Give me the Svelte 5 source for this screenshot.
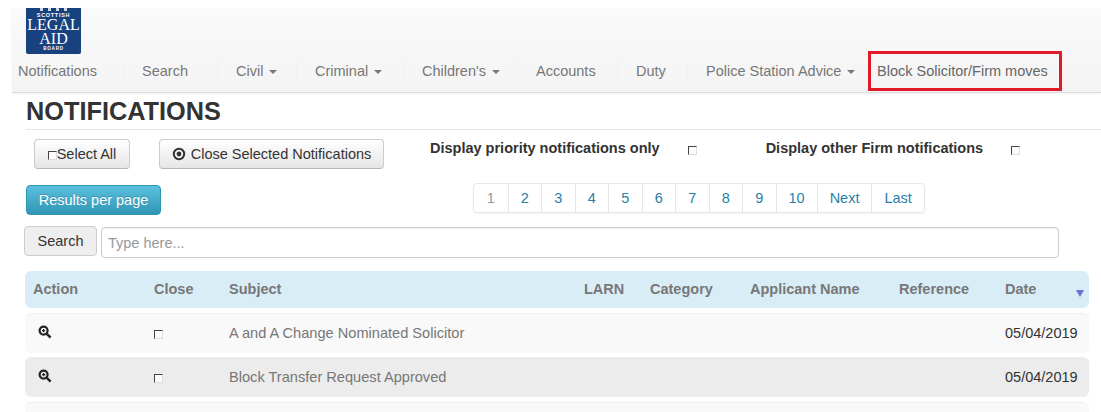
<script>
	const nav = [
		{ label: "Notifications" },
		{ label: "Search" },
		{ label: "Civil", caret: true },
		{ label: "Criminal", caret: true },
		{ label: "Children's", caret: true },
		{ label: "Accounts" },
		{ label: "Duty" },
		{ label: "Police Station Advice", caret: true }
	];
	const pages = ["1", "2", "3", "4", "5", "6", "7", "8", "9", "10", "Next", "Last"];
	const heads = ["Action", "Close", "Subject", "LARN", "Category", "Applicant Name", "Reference", "Date"];
	const rows = [
		{ subject: "A and A Change Nominated Solicitor", date: "05/04/2019" },
		{ subject: "Block Transfer Request Approved", date: "05/04/2019" },
		{ subject: "", date: "" }
	];
</script>

<div class="page">
	<header class="navbar">
		<div class="logo">
			<div class="crest"><i></i><i></i><i></i><i></i></div>
			<div class="scottish">SCOTTISH</div>
			<div class="big">LEGAL</div>
			<div class="big">AID</div>
			<div class="board">BOARD</div>
		</div>
		<nav class="links">
			{#each nav as item}
				<a class="link">{item.label}{#if item.caret}<b class="caret"></b>{/if}</a>
			{/each}
			<a class="link marked">Block Solicitor/Firm moves</a>
		</nav>
	</header>

	<h1>NOTIFICATIONS</h1>

	<div class="actions">
		<button class="btn select-all"><input type="checkbox" />Select All</button>
		<button class="btn close-selected">
			<svg width="14" height="14" viewBox="0 0 14 14">
				<circle cx="7" cy="7" r="5.2" fill="none" stroke="#333" stroke-width="2" />
				<circle cx="7" cy="7" r="2.4" fill="#333" />
			</svg>
			Close Selected Notifications
		</button>
		<label class="opt first">Display priority notifications only</label>
		<input class="opt-box" type="checkbox" />
		<label class="opt second">Display other Firm notifications</label>
		<input class="opt-box" type="checkbox" />
	</div>

	<div class="paging-row">
		<button class="btn-info">Results per page</button>
		<div class="pagination">
			{#each pages as p, i}
				<a class:current={i === 0}>{p}</a>
			{/each}
		</div>
	</div>

	<div class="search-row">
		<button class="search-btn">Search</button>
		<input class="search" placeholder="Type here..." />
	</div>

	<div class="table">
		<div class="row head">
			{#each heads as h}
				<div>{h}</div>
			{/each}
			<span class="sort"></span>
		</div>
		{#each rows as r, i}
			<div class="row item" class:alt={i === 1}>
				{#if r.subject}
					<div>
						<svg class="zoom" width="14" height="14" viewBox="0 0 14 14">
							<circle cx="5.6" cy="5.6" r="4" fill="none" stroke="#222" stroke-width="2.2" />
							<path d="M4 5.6h3.2M5.6 4v3.2" stroke="#222" stroke-width="1.2" />
							<path d="M8.8 8.8l3.8 3.8" stroke="#222" stroke-width="2.4" />
						</svg>
					</div>
					<div><input type="checkbox" /></div>
					<div class="subject">{r.subject}</div>
					<div></div>
					<div></div>
					<div></div>
					<div></div>
					<div class="date">{r.date}</div>
				{/if}
			</div>
		{/each}
	</div>
</div>

<style>
	:global(body) {
		font-family: "Liberation Sans", Arial, sans-serif;
		font-size: 14.5px;
		color: #333;
		background: #fff;
		overflow: hidden;
	}

	.page {
		height: 412px;
		overflow: hidden;
		padding-top: 8px;
		box-sizing: border-box;
	}

	.navbar {
		margin-left: 12px;
		height: 85px;
		background: linear-gradient(#fafafa, #f4f4f4);
		border-bottom: 1px solid #dcdcdc;
		box-shadow: 0 1px 2px rgba(0, 0, 0, 0.06);
		box-sizing: border-box;
		display: flex;
		flex-direction: column;
	}

	.logo {
		width: 55px;
		height: 46px;
		margin-left: 14px;
		background: #17417f;
		border-radius: 0 0 2px 2px;
		color: #fff;
		text-align: center;
		overflow: hidden;
		font-family: "Liberation Serif", serif;
		flex: none;
	}
	.crest {
		display: flex;
		justify-content: center;
		gap: 5px;
		height: 5px;
	}
	.crest i {
		width: 3px;
		height: 3px;
		background: #cfd8e6;
	}
	.scottish, .board {
		font-family: "Liberation Sans", sans-serif;
		font-weight: bold;
	}
	.scottish {
		font-size: 5.5px;
		line-height: 5px;
		letter-spacing: 0.7px;
	}
	.board {
		font-size: 4.5px;
		line-height: 5px;
		letter-spacing: 0.8px;
	}
	.big {
		font-size: 16px;
		line-height: 14px;
	}

	.links {
		display: grid;
		grid-template-columns: 124px 94px 79px 107px 114px 100px 70px 162px auto;
		padding-left: 6px;
		margin-top: -3px;
		height: 40px;
		align-items: center;
	}
	.link {
		color: #777;
		white-space: nowrap;
		position: relative;
		line-height: 40px;
		height: 40px;
		box-sizing: border-box;
	}
	/* the faint dividers between menu items */
	.link:not(:first-child):not(.marked)::before {
		content: "";
		position: absolute;
		left: -19px;
		top: 0;
		bottom: 0;
		width: 1px;
		background: linear-gradient(transparent, #f0f0f0, transparent);
	}
	.marked {
		width: 194px;
		border: 3px solid #e11a27;
		padding-left: 6px;
		line-height: 34px;
		color: #666;
	}
	.caret {
		display: inline-block;
		margin-left: 6px;
		vertical-align: middle;
		border-top: 4px solid #777;
		border-left: 4px solid transparent;
		border-right: 4px solid transparent;
	}

	h1 {
		margin: 4px 0 0 26px;
		padding-bottom: 3px;
		font-size: 25.3px;
		line-height: 29px;
		color: #333;
		border-bottom: 1px solid #e8e8e8;
	}

	.actions {
		display: flex;
		align-items: flex-start;
		margin: 9px 0 0 34px;
		height: 30px;
	}
	.btn {
		height: 30px;
		padding: 0;
		font: 14.5px "Liberation Sans", Arial, sans-serif;
		color: #333;
		background: linear-gradient(#fff, #e6e6e6);
		border: 1px solid #ccc;
		border-bottom-color: #b8b8b8;
		border-radius: 4px;
		display: flex;
		align-items: center;
		justify-content: center;
		box-sizing: border-box;
	}
	.select-all {
		width: 96px;
	}
	.close-selected {
		width: 225px;
		margin-left: 29px;
		gap: 5px;
	}
	input[type="checkbox"] {
		appearance: none;
		width: 9px;
		height: 9px;
		margin: 0;
		background: #fbfbfb;
		border: 1px solid #ddd;
		border-top-color: #444;
		border-left-color: #444;
		box-sizing: border-box;
	}
	.select-all input[type="checkbox"] {
		margin-top: 3px;
	}
	.opt {
		font-weight: bold;
		line-height: 18px;
	}
	.first {
		margin-left: 46px;
	}
	.second {
		margin-left: 69px;
	}
	input[type="checkbox"].opt-box {
		margin: 7px 0 0 28px;
	}

	.paging-row {
		display: flex;
		align-items: flex-start;
		margin: 14px 0 0 26px;
		height: 32px;
	}
	.btn-info {
		width: 135px;
		height: 30px;
		margin-top: 2px;
		padding: 0;
		font: 14.5px "Liberation Sans", Arial, sans-serif;
		color: #fff;
		text-shadow: 0 -1px 0 rgba(0, 0, 0, 0.2);
		background: linear-gradient(#5bc0de, #2f96b4);
		border: 1px solid #2f96b4;
		border-radius: 4px;
	}
	.pagination {
		display: flex;
		margin-left: 312px;
		height: 30px;
		border: 1px solid #e6e6e6;
		border-radius: 4px;
		box-shadow: 0 1px 2px rgba(0, 0, 0, 0.05);
		box-sizing: border-box;
	}
	.pagination a {
		min-width: 33.5px;
		padding: 0 12px;
		box-sizing: border-box;
		line-height: 28px;
		text-align: center;
		color: #2a7fa8;
		border-left: 1px solid #e6e6e6;
	}
	.pagination a.current {
		color: #999;
		border-left: none;
	}

	.search-row {
		display: flex;
		align-items: flex-start;
		margin: 11px 0 0 24px;
		height: 31px;
	}
	.search-btn {
		width: 73px;
		height: 30px;
		padding: 0;
		font: 14.5px "Liberation Sans", Arial, sans-serif;
		color: #333;
		background: #eee;
		border: 1px solid #ccc;
		border-radius: 4px;
	}
	.search {
		width: 958px;
		height: 31px;
		margin: 1px 0 0 4px;
		padding: 0 6px;
		font: 14.5px "Liberation Sans", Arial, sans-serif;
		color: #555;
		border: 1px solid #ccc;
		border-radius: 4px;
		box-sizing: border-box;
		box-shadow: inset 0 1px 1px rgba(0, 0, 0, 0.07);
	}
	.search::placeholder {
		color: #999;
	}

	.table {
		margin: 14px 12px 0 25px;
	}
	.row {
		display: grid;
		grid-template-columns: 121px 75px 355px 66px 100px 149px 106px 1fr;
		padding-left: 8px;
		align-items: center;
		border-radius: 6px;
		position: relative;
	}
	.head {
		height: 37px;
		padding-bottom: 2px;
		box-sizing: border-box;
		background: #d9edf7;
		font-weight: bold;
		color: #777;
	}
	.sort {
		position: absolute;
		right: 5px;
		top: 19px;
		border-top: 7px solid #6a72d0;
		border-left: 4px solid transparent;
		border-right: 4px solid transparent;
	}
	.item {
		height: 40px;
		margin-top: 5px;
		padding-bottom: 1px;
		background: #f9f9f9;
		color: #777;
		border-top: 1px solid #eee;
		box-sizing: border-box;
	}
	.item.alt {
		background: #ececec;
		border-top-color: #ececec;
		margin-top: 4px;
	}
	.item .subject {
		font-size: 14.6px;
	}
	.item .date {
		color: #333;
	}
	.zoom {
		display: block;
		margin: -3px 0 0 5px;
	}
	.item input {
		display: block;
		margin-top: 2px;
	}
</style>
